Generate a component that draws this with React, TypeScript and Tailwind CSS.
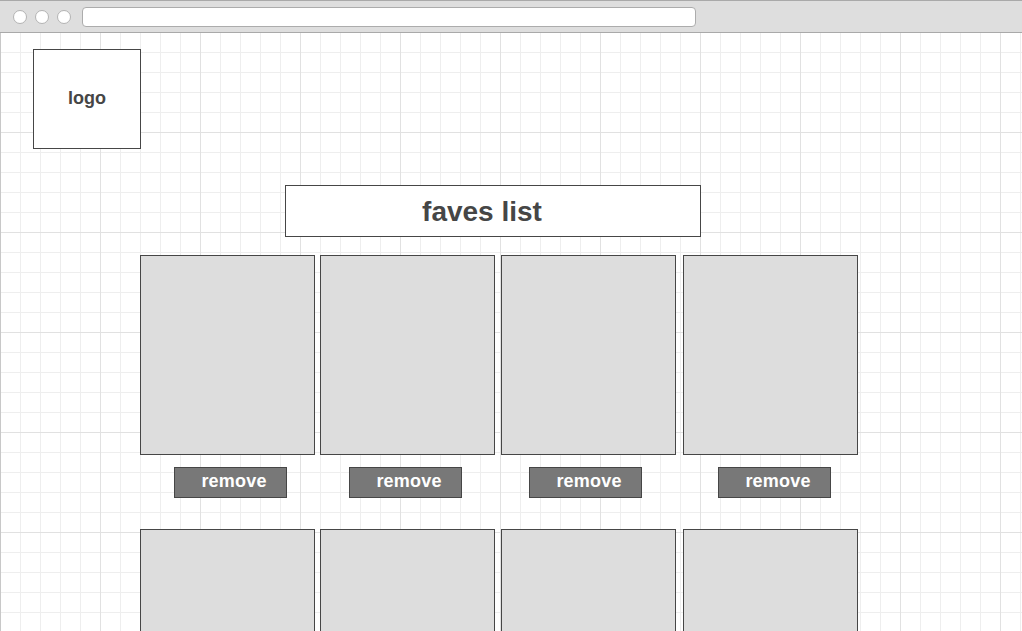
import React from "react";

const font = { fontFamily: '"Liberation Sans", Arial, Helvetica, sans-serif' };

function Card() {
  return <div className="w-[175px] h-[200px] bg-[#dddddd] border border-[#464646]" />;
}

function Btn({ ml }: { ml: string }) {
  return (
    <div
      className={`${ml} mt-[12px] w-[113px] h-[31px] bg-[#787878] border border-[#464646] flex items-center justify-center text-white font-bold text-[18px] tracking-[0.2px] leading-none pl-[7px] pb-[3px]`}
    >
      remove
    </div>
  );
}

export default function App() {
  const mls = ["ml-[34px]", "ml-[29px]", "ml-[28px]", "ml-[35px]"];
  const cardMls = ["ml-0", "ml-[5px]", "ml-[6px]", "ml-[7px]"];
  return (
    <div className="w-[1022px] h-[631px] overflow-hidden bg-white flex flex-col" style={font}>
      {/* browser chrome */}
      <div className="h-[33px] shrink-0 bg-[#dedede] border-t border-b border-[#a9a9a9] flex items-center pl-[13px]">
        <div className="flex gap-[8px] items-center">
          <div className="w-[14px] h-[14px] rounded-full bg-white border border-[#b3b3b3]" />
          <div className="w-[14px] h-[14px] rounded-full bg-white border border-[#b3b3b3]" />
          <div className="w-[14px] h-[14px] rounded-full bg-white border border-[#b3b3b3]" />
        </div>
        <div className="ml-[11px] w-[614px] h-[20px] bg-white rounded-[4px] border border-[#acacac]" />
      </div>
      {/* canvas */}
      <div className="flex-1 border-l border-[#c8c8c8] bg-white bg-[linear-gradient(to_right,#e1e1e1_1px,transparent_1px),linear-gradient(to_bottom,#e1e1e1_1px,transparent_1px),linear-gradient(to_right,#eeeeee_1px,transparent_1px),linear-gradient(to_bottom,#eeeeee_1px,transparent_1px)] bg-[size:100px_100px,100px_100px,20px_20px,20px_20px] bg-[position:-1px_-1px,-1px_-1px,-1px_-1px,-1px_-1px] pl-[32px] pt-[16px] text-[#464646]">
        <div className="w-[108px] h-[100px] bg-white border border-[#464646] flex items-center justify-center font-bold text-[18px] leading-none pb-[2px]">
          logo
        </div>
        <div className="ml-[252px] mt-[36px] w-[416px] h-[52px] bg-white border border-[#464646] flex items-center justify-center font-bold text-[28px] leading-none pt-[2px] pr-[22px]">
          faves list
        </div>
        <div className="ml-[107px] mt-[18px] flex">
          {mls.map((m, i) => (
            <div key={i} className={`${cardMls[i]} flex flex-col`}>
              <Card />
              <Btn ml={m} />
              <div className="mt-[31px]">
                <Card />
              </div>
            </div>
          ))}
        </div>
      </div>
    </div>
  );
}
